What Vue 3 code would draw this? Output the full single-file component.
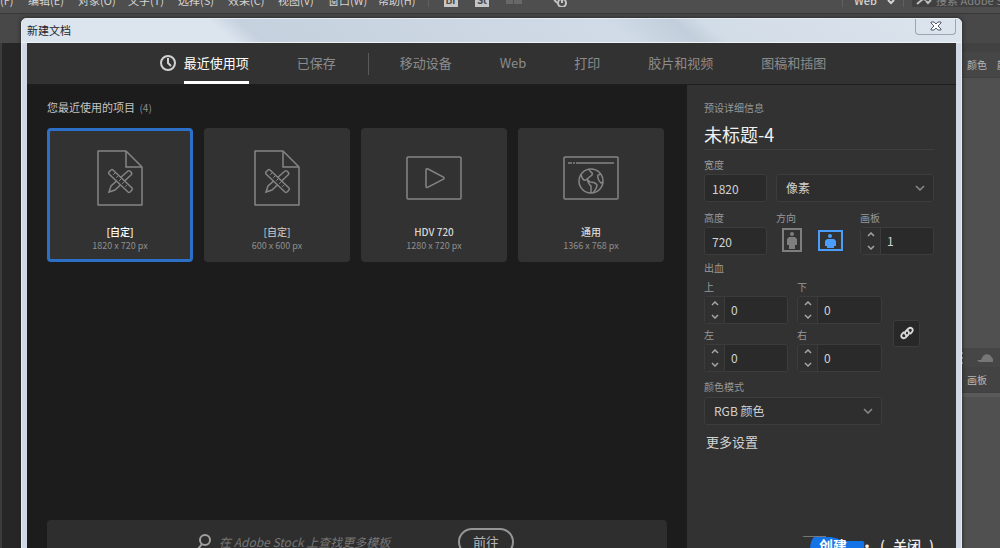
<script setup>
import { ref, reactive } from 'vue'

const menus = ['文件(F)', '编辑(E)', '对象(O)', '文字(T)', '选择(S)', '效果(C)', '视图(V)', '窗口(W)', '帮助(H)']
const tabsLeft = ['最近使用项', '已保存']
const tabsRight = ['移动设备', 'Web', '打印', '胶片和视频', '图稿和插图']
const activeTab = ref('最近使用项')
const presets = [
  { name: '[自定]', size: '1820 x 720 px', icon: 'doc' },
  { name: '[自定]', size: '600 x 600 px', icon: 'doc' },
  { name: 'HDV 720', size: '1280 x 720 px', icon: 'video' },
  { name: '通用', size: '1366 x 768 px', icon: 'web' },
]
const selected = ref(0)
const form = reactive({ title: '未标题-4', width: '1820', height: '720', orient: 'landscape', boards: 1 })
const bleeds = reactive([
  { id: 'top', label: '上', value: 0 },
  { id: 'bottom', label: '下', value: 0 },
  { id: 'left', label: '左', value: 0 },
  { id: 'right', label: '右', value: 0 },
])
const linked = ref(true)
const step = (o, key, d) => { o[key] = Math.max(0, Number(o[key]) + d) }
</script>

<template>
  <div class="app">
    <header class="menubar">
      <nav class="menus">
        <a v-for="m in menus" :key="m" href="#">{{ m }}</a>
      </nav>
      <span class="rule"></span>
      <div class="apps">
        <button class="badge" type="button">Br</button>
        <button class="badge" type="button">St</button>
        <svg width="16" height="10" viewBox="0 0 16 10" fill="#686868"><path d="M0 1h7v6H0zM8 1h8v6H8z" /></svg>
        <svg class="gpu" width="16" height="14" viewBox="0 0 16 14" fill="none" stroke="#c4c4c4" stroke-width="2"><path d="M1 5l4 5" /><circle cx="10" cy="10" r="4" /><path d="M10 6v4" /></svg>
      </div>
      <div class="workspace">
        <span>Web</span>
        <svg width="8" height="8" viewBox="0 0 8 8" fill="none" stroke="#d4d4d4" stroke-width="2"><path d="M1 1l3 3 3-3" /></svg>
      </div>
      <div class="help">
        <svg width="16" height="10" viewBox="0 0 16 10" fill="none" stroke="#bdbdbd" stroke-width="2"><path d="M1 7l6-5 3 1M10 4l2 2 3-3" /></svg>
        <span>搜索 Adobe Stock</span>
      </div>
    </header>
    <div class="controlbar"></div>
    <div class="workarea">
      <div class="canvas"></div>
      <aside class="docks">
        <div class="dock-gap"></div>
        <div class="dock-tabs"><span>颜色</span><span>颜色参考</span></div>
        <div class="dock-body"></div>
        <div class="dock-tools">
          <svg width="6" height="14" viewBox="0 0 6 14" fill="none" stroke="#b0b0b0" stroke-width="2"><path d="M0 2h4M2 7h2M0 12h4" /></svg>
          <svg width="16" height="12" viewBox="0 0 16 12" fill="#777"><path d="M0 8h4l2-4 3-2 4 1 3 4v3H2z" /></svg>
          <svg width="12" height="12" viewBox="0 0 12 12" fill="none" stroke="#888" stroke-width="2"><path d="M2 1v9h6" /></svg>
        </div>
        <div class="dock-tabs low"><span>画板</span></div>
        <div class="dock-body rest"></div>
      </aside>
    </div>

    <section class="dialog" role="dialog" aria-labelledby="dlg-title">
      <div class="titlebar">
        <h1 id="dlg-title">新建文档</h1>
        <button class="close" type="button" aria-label="关闭">
          <svg width="12" height="10" viewBox="0 0 12 10"><path d="M1 1h3l2 2 2-2h3v1L8 5l3 3v1H8L6 7 4 9H1V8l3-3-3-3z" fill="#fff" stroke="#55596a" /></svg>
        </button>
      </div>

      <div class="frame">
        <nav class="tabs">
          <svg class="clock" width="18" height="18" viewBox="0 0 18 18" fill="none" stroke="#d2d2d2" stroke-width="2"><circle cx="9" cy="9" r="7" /><path d="M9 4v5l3 3" /></svg>
          <button v-for="t in tabsLeft" :key="t" type="button" :class="['tab', { on: t === activeTab }]" @click="activeTab = t">{{ t }}</button>
          <span class="sep"></span>
          <button v-for="t in tabsRight" :key="t" type="button" :class="['tab', { on: t === activeTab }]" @click="activeTab = t">{{ t }}</button>
        </nav>

        <div class="body">
          <main class="main">
            <h2>您最近使用的项目 <span>(4)</span></h2>
            <div class="cards">
              <button v-for="(p, i) in presets" :key="i" type="button" :class="['card', p.icon, { on: i === selected }]" @click="selected = i">
                <span class="art">
                  <svg v-if="p.icon === 'doc'" width="46" height="56" viewBox="0 0 46 56" fill="none" stroke="#858585" stroke-width="1.5">
                    <path d="M1 1h28l16 16v38H1z" stroke-linejoin="round" />
                    <path d="M29 1v16h16" />
                    <path d="M31 21q1.500-1 3 1 1.500 1.500 0 3L18 40l-6 2 2-6z" />
                    <path d="M16 20l19 18q.8 1 0 2l-2 2q-1 .8-2 0L12 24q-.8-1 0-2l2-2q1-.8 2 0z" fill="#323232" />
                    <path d="M18 23l-1.800 1.800M21 26l-1.800 1.800M24 29l-1.800 1.800M27 32l-1.800 1.800M30 35l-1.800 1.800" stroke-width="1" />
                  </svg>
                  <svg v-else-if="p.icon === 'video'" width="56" height="44" viewBox="0 0 56 44" fill="none" stroke="#858585" stroke-width="1.500" stroke-linejoin="round">
                    <rect x="1" y="1" width="54" height="42" rx="1" />
                    <path d="M20 13.500v17q.5 1.500 2 .7l15.500-8q1.200-1.200 0-2L22 13q-1.500-.8-2 .5z" />
                  </svg>
                  <svg v-else width="56" height="44" viewBox="0 0 56 44" fill="none" stroke="#858585" stroke-width="1.500">
                    <rect x="1" y="1" width="54" height="42" rx="1" />
                    <path d="M5 7h4M10 7h2M13 7h38" />
                    <circle cx="28" cy="25" r="12" />
                    <path d="M18 18q1 5 3 6 1 1 3-1l5-4q1-2-1-3l-2-2M24 23l3 3q5 0 7 3 0 3-4 8M24 23q2 6 4 7v7M38 18l-3 1q-1 4 3 8l2-1" />
                  </svg>
                </span>
                <strong>{{ p.name }}</strong>
                <small>{{ p.size }}</small>
              </button>
            </div>

            <form class="stock" @submit.prevent>
              <label for="stock" aria-label="搜索">
                <svg width="14" height="16" viewBox="0 0 14 16" fill="none" stroke="#a0a0a0" stroke-width="2"><circle cx="8" cy="6" r="5" /><path d="M5 10l-4 5" /></svg>
              </label>
              <input id="stock" type="text" placeholder="在 Adobe Stock 上查找更多模板" />
              <button type="submit">前往</button>
            </form>
          </main>

          <aside class="details">
            <label class="lbl" for="doc-name">预设详细信息</label>
            <input id="doc-name" v-model="form.title" class="name" type="text" />

            <div class="row size">
              <div class="field">
                <label class="lbl" for="w">宽度</label>
                <input id="w" v-model="form.width" class="box" type="text" />
              </div>
              <div class="field grow select">
                <select aria-label="单位"><option>像素</option></select>
                <svg class="chev" width="10" height="6" viewBox="0 0 10 6" fill="none" stroke="#8a8a8a" stroke-width="1.500"><path d="M1 1l4 4 4-4" /></svg>
              </div>
            </div>

            <div class="row">
              <div class="field">
                <label class="lbl" for="h">高度</label>
                <input id="h" v-model="form.height" class="box" type="text" />
              </div>
              <div class="field grow" role="radiogroup" aria-labelledby="orient">
                <span id="orient" class="lbl">方向</span>
                <div class="orient">
                  <label>
                    <input v-model="form.orient" type="radio" value="portrait" aria-label="纵向" />
                    <svg width="20" height="24" viewBox="0 0 20 24"><rect x="1" y="1" width="18" height="22" fill="none" stroke="currentColor" stroke-width="2" /><circle cx="10" cy="6" r="2" fill="currentColor" /><path d="M7 9h6l2 2v6h-2v4H7v-4H5v-6z" fill="currentColor" /></svg>
                  </label>
                  <label>
                    <input v-model="form.orient" type="radio" value="landscape" aria-label="横向" />
                    <svg width="25" height="21" viewBox="0 0 25 21"><rect x="1" y="1" width="23" height="19" fill="none" stroke="currentColor" stroke-width="2" /><circle cx="12" cy="6" r="2" fill="currentColor" /><path d="M9 9h7l2 2v5h-2v2H9v-2H7v-5z" fill="currentColor" /></svg>
                  </label>
                </div>
              </div>
              <div class="field boards">
                <label class="lbl" for="boards">画板</label>
                <div class="stepper">
                  <span class="steps">
                    <button type="button" aria-label="增加画板" @click="step(form, 'boards', 1)"><svg width="8" height="5" viewBox="0 0 8 5"><path d="M1 4l3-3 3 3" /></svg></button>
                    <button type="button" aria-label="减少画板" @click="step(form, 'boards', -1)"><svg width="8" height="5" viewBox="0 0 8 5"><path d="M1 1l3 3 3-3" /></svg></button>
                  </span>
                  <input id="boards" v-model="form.boards" type="text" />
                </div>
              </div>
            </div>

            <p class="lbl bleed-title">出血</p>
            <div class="bleed">
              <div class="bleed-grid">
                <div v-for="b in bleeds" :key="b.id" class="field">
                  <label class="lbl" :for="b.id">{{ b.label }}</label>
                  <div class="stepper">
                    <span class="steps">
                      <button type="button" :aria-label="b.label + '增加'" @click="step(b, 'value', 1)"><svg width="8" height="5" viewBox="0 0 8 5"><path d="M1 4l3-3 3 3" /></svg></button>
                      <button type="button" :aria-label="b.label + '减少'" @click="step(b, 'value', -1)"><svg width="8" height="5" viewBox="0 0 8 5"><path d="M1 1l3 3 3-3" /></svg></button>
                    </span>
                    <input :id="b.id" v-model="b.value" type="text" />
                  </div>
                </div>
              </div>
              <button class="link" type="button" aria-label="链接" :aria-pressed="linked" @click="linked = !linked">
                <svg width="14" height="14" viewBox="0 0 14 14" fill="none" stroke="#dadada" stroke-width="1.800" stroke-linecap="round"><path d="M6 9Q4 7 6 5l2.500-2.500q2-1.500 3.500 0t0 3.500L10.500 7.500M8 5Q10 7 8 9l-2.500 2.500q-2 1.500-3.500 0t0-3.500L3.500 6.500" /></svg>
              </button>
            </div>

            <label class="lbl mode-label" for="mode">颜色模式</label>
            <div class="select mode">
              <select id="mode"><option>RGB 颜色</option></select>
              <svg class="chev" width="10" height="6" viewBox="0 0 10 6" fill="none" stroke="#8a8a8a" stroke-width="1.500"><path d="M1 1l4 4 4-4" /></svg>
            </div>
            <a class="more" href="#">更多设置</a>

            <div class="actions">
              <button class="create" type="button">
                <svg class="swash" width="64" height="32" viewBox="0 0 64 32" aria-hidden="true"><path d="M0 1h24v1H2z" fill="#777" /><path d="M12 2h17q7 1 11 4h21q2 1 1 4v22H12q-5-5-4-17 0-9 4-13z" fill="#1473e6" /></svg>
                <span>创建</span>
              </button>
              <span class="dot">·</span>
              <button class="cancel" type="button"><span>(</span><span>关闭</span><span>)</span></button>
            </div>
          </aside>
        </div>
      </div>
    </section>
  </div>
</template>

<style>
body { margin: 0; background: #505050; }
</style>

<style scoped>
.app, .app * { box-sizing: border-box; }
.app {
  position: relative;
  display: flex;
  flex-direction: column;
  height: 100vh;
  overflow: hidden;
  background: #505050;
  color: #c8c8c8;
  font: 12px/16px "Noto Sans CJK SC", sans-serif;
}
button, input, select { font: inherit; color: inherit; margin: 0; padding: 0; border: 0; background: none; border-radius: 0; outline: none; }
input { min-width: 0; }
a { color: inherit; text-decoration: none; }
h1, h2, p { margin: 0; font-weight: 400; }
svg { display: block; flex: none; }

.menubar { display: flex; align-items: flex-end; height: 14px; padding-bottom: 6px; background: #4e4e4e; border-bottom: 1px solid #383838; font-size: 11px; line-height: 14px; color: #d4d4d4; overflow: hidden; flex: none; }
.menus { display: flex; gap: 10px; margin-left: -22px; white-space: nowrap; }
.menus a { width: 40px; }
.rule { width: 1px; height: 16px; margin-left: 10px; background: #606060; }
.apps { display: flex; align-items: flex-end; gap: 17px; margin-left: 15px; }
.badge { width: 14px; height: 14px; background: #c6c6c6; color: #4a4a4a; font-size: 10px; font-weight: 700; line-height: 14px; }
.gpu { margin-left: 13px; }
.workspace { display: flex; align-items: flex-end; gap: 10px; margin-left: auto; padding: 0 8px 0 11px; border-left: 1px solid #606060; border-right: 1px solid #606060; font-weight: 500; }
.help { display: flex; align-items: flex-end; width: 88px; margin-left: 8px; padding-left: 4px; gap: 4px; background: #404040; color: #858585; white-space: nowrap; overflow: hidden; }
.controlbar { height: 29px; background: #484848; flex: none; }
.workarea { display: flex; flex: 1; }
.canvas { flex: 1; background: #262626; border-left: 2px solid #3c3c3c; }
.docks { display: flex; flex-direction: column; width: 42px; background: #505050; }
.dock-gap { height: 9px; background: #424242; }
.dock-tabs { display: flex; align-items: center; gap: 10px; height: 26px; padding-left: 9px; background: #464646; color: #b8b8b8; font-size: 10px; white-space: nowrap; overflow: hidden; border-bottom: 1px solid #404040; }
.dock-body { height: 270px; }
.dock-tools { display: flex; align-items: center; gap: 12px; height: 19px; padding-left: 1px; background: #464646; overflow: hidden; }
.dock-tabs.low { background: #434343; }
.rest { border-top: 4px solid #5a5a5a; }

.dialog {
  position: absolute;
  inset: 18px 38px -43px 21px;
  display: flex;
  flex-direction: column;
  padding: 0 5px 6px;
  border: 1px solid #e6ecf3;
  border-radius: 5px 5px 0 0;
  background: #cfd8e4;
  box-shadow: 0 0 4px #222;
}
.titlebar {
  display: flex;
  justify-content: space-between;
  height: 24px;
  margin: 0 -5px;
  padding: 0 5px;
  border-bottom: 1px solid #edf2f7;
  border-radius: 4px 4px 0 0;
  background: linear-gradient(40deg, #dce4ee 0 22%, #c5d1de 25%, #cbd6e2 45%, #d0dbe7 63%, #c2cedb 70%, #d2dce7 73%, #dce4ed);
}
.titlebar h1 { font-size: 11px; line-height: 22px; color: #20242c; }
.close { display: flex; justify-content: center; width: 41px; height: 16px; padding-top: 2px; border: 1px solid #9ba6b4; border-top: 0; border-radius: 0 0 4px 4px; }
.frame { display: flex; flex-direction: column; flex: 1; background: #323232; }
.tabs { display: flex; align-items: center; justify-content: center; height: 42px; padding-left: 26px; border-bottom: 1px solid #1e1e1e; color: #8c8c8c; font-size: 13px; }
.tab { height: 41px; margin: 0 24px; padding-bottom: 2px; border-top: 3px solid transparent; border-bottom: 3px solid transparent; white-space: nowrap; }
.tab.on { color: #fff; border-bottom-color: #fff; }
.clock { margin: 0 -17px 2px 0; }
.sep { width: 1px; height: 22px; margin: 0 7px 0 8px; background: #5a5a5a; }

.body { display: flex; flex: 1; }
.main { display: flex; flex-direction: column; flex: 1; min-width: 0; padding: 14px 20px 20px; background: #1c1c1c; }
.main h2 { font-size: 11px; line-height: 16px; color: #c4c4c4; }
.main h2 span { margin-left: 2px; color: #8c8c8c; font-size: 10px; }
.cards { display: grid; grid-template-columns: repeat(4, 1fr); gap: 11px; margin: 12px 3px 0 0; }
.card { display: flex; flex-direction: column; align-items: center; height: 134px; border: 3px solid #323232; border-radius: 4px; background: #323232; }
.card.on { border-color: #2b6fc7; }
.art { display: flex; align-items: center; height: 94px; }
.card strong { font-size: 10px; line-height: 14px; font-weight: 500; color: #d6d6d6; }
.card.doc strong { color: #bcbcbc; }
.card.on strong { color: #fff; }
.card small { font-size: 9px; line-height: 14px; color: #8e8e8e; }
.stock { display: flex; align-items: center; height: 44px; margin-top: auto; padding-left: 150px; border-radius: 4px 4px 0 0; background: #2e2e2e; }
.stock input { width: 239px; margin-left: 8px; font-style: italic; font-size: 12px; }
.stock input::placeholder { color: #767676; opacity: 1; }
.stock button { width: 56px; height: 28px; border: 2px solid #959595; border-radius: 14px; color: #b4b4b4; font-size: 13px; }

.details { display: flex; flex-direction: column; width: 269px; padding: 16px 22px 0 17px; color: #d2d2d2; }
.lbl { display: block; font-size: 10px; line-height: 14px; color: #989898; }
.name { height: 35px; padding-top: 4px; border-bottom: 1px solid #3e3e3e; color: #f0f0f0; font-size: 18px; }
.row { display: flex; align-items: flex-end; gap: 9px; margin-top: 9px; }
.row.size { margin-top: 8px; }
.field { display: flex; flex-direction: column; }
.grow { flex: 1; }
.box { width: 63px; padding-left: 7px; }
.box, .stepper, .select select { height: 28px; margin-top: 2px; border: 1px solid #3c3c3c; border-radius: 3px; background: #2a2a2a; }
.select { position: relative; }
.select select { width: 100%; padding-left: 9px; appearance: none; background: #2e2e2e; }
.chev { position: absolute; right: 9px; bottom: 11px; }
.orient { display: flex; align-items: center; gap: 16px; height: 30px; padding-left: 6px; }
.orient label { position: relative; color: #7e7e7e; }
.orient input { position: absolute; inset: 0; opacity: 0; }
.orient input:checked + svg { color: #4a9df8; }
.boards { width: 74px; }
.stepper { display: flex; }
.stepper input { flex: 1; width: 20px; padding-left: 6px; }
.steps { display: flex; flex-direction: column; width: 20px; border-right: 1px solid #3c3c3c; background: #303030; }
.steps button { display: flex; flex: 1; align-items: center; justify-content: center; }
.steps svg { fill: none; stroke: #a4a4a4; stroke-width: 1.500; }
.bleed-title { margin-top: 6px; }
.bleed { display: flex; align-items: center; gap: 11px; margin-top: 5px; }
.bleed-grid { display: grid; grid-template-columns: 84px 85px; gap: 4px 9px; }
.link { display: flex; align-items: center; justify-content: center; width: 27px; height: 27px; margin-top: 14px; border: 1px solid #3c3c3c; border-radius: 3px; background: #282828; }
.mode-label { margin-top: 8px; }
.mode { width: 178px; margin-top: 1px; }
.more { margin: 8px 0 0 2px; font-size: 13px; line-height: 18px; }
.actions { display: flex; align-items: flex-start; margin-top: auto; height: 50px; padding-left: 98px; color: #eee; font-size: 14px; line-height: 22px; white-space: nowrap; }
.create { position: relative; width: 64px; padding-left: 8px; color: #fff; font-weight: 700; }
.create span { position: relative; }
.swash { position: absolute; left: 0; top: 1px; }
.dot { margin-left: 4px; font-weight: 700; }
.cancel { display: flex; gap: 8px; margin-left: 6px; font-weight: 500; }
</style>
